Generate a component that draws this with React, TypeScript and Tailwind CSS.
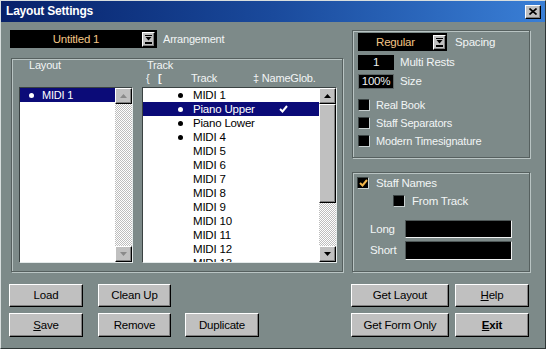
import React from "react";

const raised =
  "bg-[#c0c0c0] border border-t-white border-l-white border-b-black border-r-black shadow-[inset_-1px_-1px_0_#808080]";

function DropArrow() {
  return (
    <div className={"w-[13px] h-[15px] flex items-center justify-center " + raised}>
      <svg width="7" height="9" viewBox="0 0 7 9">
        <rect x="0" y="0" width="7" height="1" fill="#000" />
        <path d="M0.5 2 L6.5 2 L3.5 5.5 Z" fill="#000" />
        <rect x="0" y="7" width="7" height="2" fill="#000" />
      </svg>
    </div>
  );
}

function Checkbox({ checked = false }: { checked?: boolean }) {
  return (
    <div className="w-[12px] h-[12px] bg-black border border-t-[#3a4343] border-l-[#3a4343] border-b-[#c7d0d0] border-r-[#c7d0d0] flex items-center justify-center shrink-0">
      {checked && (
        <svg width="9" height="8" viewBox="0 0 9 8">
          <path d="M1 4 L3.5 6.5 L8 1" stroke="#f2b64a" strokeWidth="2" fill="none" />
        </svg>
      )}
    </div>
  );
}

function ScrollBtn({ dir, disabled = false }: { dir: "up" | "down"; disabled?: boolean }) {
  const c = disabled ? "#8a8a8a" : "#000";
  return (
    <div className={"w-[17px] h-[16px] flex items-center justify-center shrink-0 " + raised}>
      <svg width="7" height="4" viewBox="0 0 7 4">
        {dir === "up" ? (
          <path d="M0 4 L7 4 L3.5 0 Z" fill={c} />
        ) : (
          <path d="M0 0 L7 0 L3.5 4 Z" fill={c} />
        )}
      </svg>
    </div>
  );
}

const hatch =
  "bg-[repeating-conic-gradient(#bdbdbd_0%_25%,#ffffff_0%_50%)] bg-[length:2px_2px]";

function Btn({ w, children }: { w: string; children: React.ReactNode }) {
  return (
    <div className={w + " h-full flex items-center justify-center text-black text-[11.5px] " + raised}>
      {children}
    </div>
  );
}

const tracks = [
  { n: "MIDI 1", dot: true },
  { n: "Piano Upper", dot: true, sel: true, check: true },
  { n: "Piano Lower", dot: true },
  { n: "MIDI 4", dot: true },
  { n: "MIDI 5" },
  { n: "MIDI 6" },
  { n: "MIDI 7" },
  { n: "MIDI 8" },
  { n: "MIDI 9" },
  { n: "MIDI 10" },
  { n: "MIDI 11" },
  { n: "MIDI 12" },
  { n: "MIDI 13" },
];

const group =
  "border border-[#56605f] shadow-[inset_1px_1px_0_#b9c4c3,1px_1px_0_#b9c4c3]";

export default function App() {
  return (
    <div className="w-[546px] h-[349px] bg-[#7d8a89] flex flex-col border border-t-[#d8dede] border-l-[#d8dede] border-r-[#2e3636] border-b-[#2e3636] text-[11px] leading-[13px] tracking-[-0.2px] text-[#f2f5f5] font-['Liberation_Sans',Arial,sans-serif] overflow-hidden">
      {/* Title bar */}
      <div className="h-[21px] shrink-0 flex items-center bg-gradient-to-r from-[#08216a] via-[#1a4a9c] to-[#3a7fd6] pl-[5px] pr-[4px]">
        <span className="text-white font-bold text-[12px] tracking-[-0.2px]">Layout Settings</span>
        <div className="flex-1" />
        <div className={"w-[16px] h-[14px] flex items-center justify-center " + raised}>
          <svg width="8" height="7" viewBox="0 0 8 7">
            <path d="M0.5 0.5 L7.5 6.5 M7.5 0.5 L0.5 6.5" stroke="#000" strokeWidth="1.6" />
          </svg>
        </div>
      </div>

      {/* Main area */}
      <div className="flex pl-[9px] pt-[8px]">
        {/* Left column */}
        <div className="w-[333px] flex flex-col">
          <div className="h-[18px] flex items-center">
            <div className="w-[147px] h-[18px] bg-black flex items-center">
              <span className="flex-1 text-center text-[#f3c586] text-[11.5px]">Untitled 1</span>
              <div className="mr-[2px]">
                <DropArrow />
              </div>
            </div>
            <span className="ml-[6px]">Arrangement</span>
          </div>

          <div className={"mt-[10px] ml-[1px] w-[332px] h-[214px] flex pl-[7px] " + group}>
            {/* Layout column */}
            <div className="w-[114px] flex flex-col">
              <div className="h-[13px] pl-[10px]">Layout</div>
              <div className="h-[13px]" />
              <div className="mt-[2px] h-[176px] flex bg-white border border-t-[#3a4242] border-l-[#3a4242] border-b-[#e4eaea] border-r-[#e4eaea]">
                <div className="flex-1 flex flex-col">
                  <div className="h-[14px] bg-[#0b0b78] flex items-center pl-[9px] text-white">
                    <div className="w-[5px] h-[5px] rounded-full bg-white" />
                    <span className="ml-[8px]">MIDI 1</span>
                  </div>
                </div>
                <div className="w-[17px] flex flex-col">
                  <ScrollBtn dir="up" disabled />
                  <div className={"flex-1 " + hatch} />
                  <ScrollBtn dir="down" disabled />
                </div>
              </div>
            </div>

            {/* Track column */}
            <div className="ml-[9px] w-[195px] flex flex-col">
              <div className="h-[13px] pl-[5px]">Track</div>
              <div className="h-[13px] flex pl-[4px]">
                <span className="w-[12px]">{"{"}</span>
                <span className="w-[33px] font-bold">[</span>
                <span className="w-[62px]">Track</span>
                <span>‡ NameGlob.</span>
              </div>
              <div className="mt-[2px] h-[176px] flex bg-white border border-t-[#3a4242] border-l-[#3a4242] border-b-[#e4eaea] border-r-[#e4eaea]">
                <div className="flex-1 flex flex-col overflow-hidden">
                  {tracks.map((t) => (
                    <div
                      key={t.n}
                      className={
                        "h-[14px] shrink-0 flex items-center pl-[35px] text-[11.5px] " +
                        (t.sel ? "bg-[#0b0b78] text-white" : "text-black")
                      }
                    >
                      <div
                        className={
                          "w-[5px] h-[5px] rounded-full " +
                          (t.dot ? (t.sel ? "bg-white" : "bg-black") : "bg-transparent")
                        }
                      />
                      <span className="ml-[10px] w-[86px]">{t.n}</span>
                      {t.check && (
                        <svg width="9" height="8" viewBox="0 0 9 8">
                          <path d="M1 4 L3.5 6.5 L8 1" stroke="#fff" strokeWidth="2" fill="none" />
                        </svg>
                      )}
                    </div>
                  ))}
                </div>
                <div className="w-[17px] flex flex-col">
                  <ScrollBtn dir="up" />
                  <div className={"h-[99px] shrink-0 " + raised} />
                  <div className={"flex-1 " + hatch} />
                  <ScrollBtn dir="down" />
                </div>
              </div>
            </div>
          </div>
        </div>

        {/* Right column */}
        <div className="ml-[9px] w-[178px] flex flex-col">
          <div className={"h-[128px] flex flex-col pl-[5px] pt-[2px] " + group}>
            <div className="h-[18px] flex items-center">
              <div className="w-[89px] h-[18px] bg-black flex items-center">
                <span className="flex-1 text-center text-[#f3c586] text-[11.5px]">Regular</span>
                <div className="mr-[1px]">
                  <DropArrow />
                </div>
              </div>
              <span className="ml-[8px] text-[11.5px]">Spacing</span>
            </div>
            <div className="mt-[4px] h-[15px] flex items-center">
              <div className="w-[36px] h-[15px] bg-black flex items-center justify-center text-[#eef0f0] text-[11.5px]">1</div>
              <span className="ml-[6px] text-[11.5px]">Multi Rests</span>
            </div>
            <div className="mt-[4px] h-[15px] flex items-center">
              <div className="w-[36px] h-[15px] bg-black border border-[#5e6767] flex items-center justify-center text-[#eef0f0] text-[11.5px]">100%</div>
              <span className="ml-[6px] text-[11.5px]">Size</span>
            </div>
            <div className="mt-[10px] flex flex-col gap-[6px]">
              <div className="h-[12px] flex items-center">
                <Checkbox />
                <span className="ml-[6px]">Real Book</span>
              </div>
              <div className="h-[12px] flex items-center">
                <Checkbox />
                <span className="ml-[6px]">Staff Separators</span>
              </div>
              <div className="h-[12px] flex items-center">
                <Checkbox />
                <span className="ml-[6px]">Modern Timesignature</span>
              </div>
            </div>
          </div>

          <div className={"mt-[14px] h-[100px] flex flex-col pt-[4px] " + group}>
            <div className="h-[12px] flex items-center pl-[4px]">
              <Checkbox checked />
              <span className="ml-[7px] text-[11.5px]">Staff Names</span>
            </div>
            <div className="mt-[6px] h-[12px] flex items-center pl-[40px]">
              <Checkbox />
              <span className="ml-[7px] text-[11.5px]">From Track</span>
            </div>
            <div className="mt-[13px] h-[18px] flex items-center pl-[17px]">
              <span className="w-[35px] text-[11.5px]">Long</span>
              <div className="w-[107px] h-[18px] bg-black border border-t-[#4e5757] border-l-[#4e5757] border-b-[#f0f2f2] border-r-[#f0f2f2]" />
            </div>
            <div className="mt-[3px] h-[19px] flex items-center pl-[17px]">
              <span className="w-[35px] text-[11.5px]">Short</span>
              <div className="w-[107px] h-[19px] bg-black border border-t-[#4e5757] border-l-[#4e5757] border-b-[#f0f2f2] border-r-[#f0f2f2]" />
            </div>
          </div>
        </div>
      </div>

      {/* Buttons */}
      <div className="mt-[12px] flex flex-col pl-[8px] pr-[16px]">
        <div className="h-[23px] flex">
          <Btn w="w-[74px]">Load</Btn>
          <div className="ml-[15px] h-full">
            <Btn w="w-[73px]">Clean Up</Btn>
          </div>
          <div className="flex-1" />
          <Btn w="w-[98px]">Get Layout</Btn>
          <div className="ml-[6px] h-full">
            <Btn w="w-[74px]">
              <span>
                <span className="underline">H</span>elp
              </span>
            </Btn>
          </div>
        </div>
        <div className="mt-[6px] h-[24px] flex">
          <Btn w="w-[74px]">
            <span>
              <span className="underline">S</span>ave
            </span>
          </Btn>
          <div className="ml-[15px] h-full">
            <Btn w="w-[73px]">Remove</Btn>
          </div>
          <div className="ml-[14px] h-full">
            <Btn w="w-[74px]">Duplicate</Btn>
          </div>
          <div className="flex-1" />
          <Btn w="w-[98px]">Get Form Only</Btn>
          <div className="ml-[6px] h-full">
            <Btn w="w-[74px]">
              <span className="font-bold">
                <span className="underline">E</span>xit
              </span>
            </Btn>
          </div>
        </div>
      </div>
    </div>
  );
}
